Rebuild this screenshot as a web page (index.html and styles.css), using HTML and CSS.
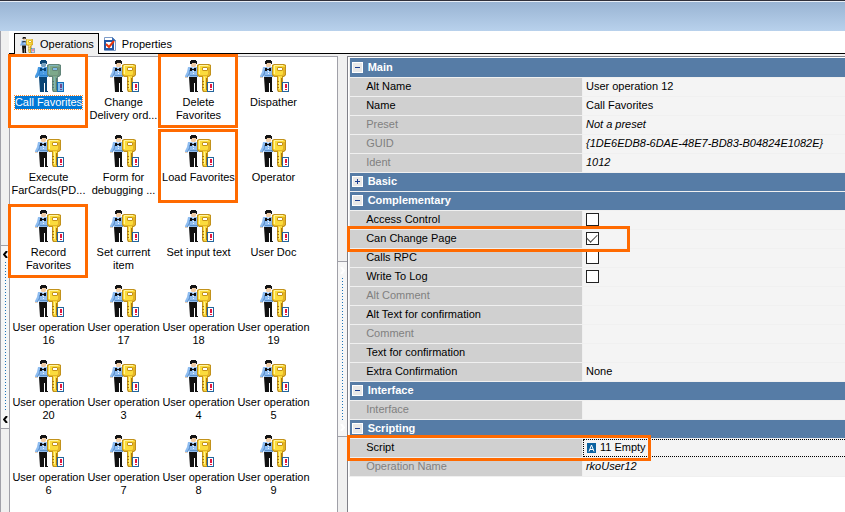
FILE: index.html
```html
<!DOCTYPE html>
<html lang="en">

<head>
    <meta charset="UTF-8" />
    <meta name="viewport" content="width=device-width, initial-scale=1.0" />
    <title>Operations</title>
    <link rel="stylesheet" href="styles.css">
</head>

<body>
    <svg class="sprite" aria-hidden="true">
        <filter id="tint" color-interpolation-filters="sRGB">
            <feFlood flood-color="#0078d7" flood-opacity="0.5" />
            <feComposite in2="SourceGraphic" operator="atop" />
        </filter>
        <symbol id="operation" viewBox="0 0 30 32">
            <!-- man -->
            <path fill="#f0cda8" d="M7 2h5v4l-1 1H8L7 6z" />
            <path fill="#151515" d="M6 1h1V0h5v1h1v3h-1V3H8v1H6z" />
            <path fill="#8fbdf0" d="M4 7h4l1 1 2-1h2l1 2v8H5v-3l-3 4H1v-2l2-4z" />
            <path fill="#5c92cf" d="M5 10h1v4l-3 4H2l3-5zM13 9h1v8h-1zM6 15h7v1H6z" />
            <path fill="#f0cda8" d="M1 17h2v1H1z" />
            <path fill="#111" d="M6 8h2v1h2V8h2v3h-2v-1H8v1H6zM5 17h8v14h1v1h-3v-9h-1v9H6z" />
            <path fill="#f2f4f8" d="M9 11h1v1H9zM9 13h1v1H9z" />
            <!-- key -->
            <path fill="#c2921b" d="M15 4h10l2 1v10l-2 2h-1v14l-1 1h-4l-1-2V17h-3l-2-2V5z" />
            <path fill="#fbdc3c" d="M15 5h10l1 1v8l-2 2h-1v14l-1 1h-2l-1-2V16h-3l-2-2V6z" />
            <path fill="#fff3a0" d="M15 5h9v1h-8v8h-1zM20 17h1v12h-1z" />
            <path fill="#e5b526" d="M24 7h2v7l-2 2h-8v-1h7l1-1z" />
            <path fill="#a8770f" d="M18 21h2v1h-2zM18 24h2v1h-2zM18 27h2v1h-2zM22 18h1v12h-1z" />
            <path fill="#c2921b" d="M18 8l1-1h4l1 1v2l-1 1h-4l-1-1z" />
            <path fill="#fff" d="M19 8h4v2h-4z" />
            <!-- note -->
            <path fill="#23649c" d="M23 22h7v10h-7z" />
            <path fill="#fff" d="M24 23h5v8h-5z" />
            <path fill="#e2173d" d="M26 24h2v4h-2zM26 29h2v1h-2z" />
        </symbol>
    </svg>

    <header class="titlebar"></header>

    <main class="window">
        <nav class="tabs">
            <button class="tab active" type="button">
                <svg width="16" height="16"><use href="#operation" /></svg>
                Operations
            </button>
            <button class="tab" type="button">
                <svg width="14" height="16" viewBox="0 0 14 16">
                    <path fill="#fff" stroke="#7e9cc8" d="M1.500.5h8l3 3v10h-11z" />
                    <path fill="#3c6fb5" d="M9 0l4 4H9z" />
                    <path fill="#fff" stroke="#2357a5" stroke-width="2" d="M2 4h8v8H2z" />
                    <path fill="none" stroke="#e8380d" stroke-width="2" d="M3 7l3 3 5-6" />
                </svg>
                Properties
            </button>
        </nav>

        <div class="workspace">
            <div class="gutter">
                <div class="grip">
                    <svg width="5" height="7" viewBox="0 0 5 7"><path d="M4 0L1 3.500 4 7" /></svg>
                    <span class="dots"></span>
                    <svg width="5" height="7" viewBox="0 0 5 7"><path d="M4 0L1 3.500 4 7" /></svg>
                </div>
            </div>

            <section class="operations">
                <button class="item selected marked" type="button"><svg><use href="#operation" /></svg><span>Call Favorites</span></button>
                <button class="item" type="button"><svg><use href="#operation" /></svg><span>Change<br>Delivery ord...</span></button>
                <button class="item marked" type="button"><svg><use href="#operation" /></svg><span>Delete<br>Favorites</span></button>
                <button class="item" type="button"><svg><use href="#operation" /></svg><span>Dispather</span></button>
                <button class="item" type="button"><svg><use href="#operation" /></svg><span>Execute<br>FarCards(PD...</span></button>
                <button class="item" type="button"><svg><use href="#operation" /></svg><span>Form for<br>debugging ...</span></button>
                <button class="item marked" type="button"><svg><use href="#operation" /></svg><span>Load Favorites</span></button>
                <button class="item" type="button"><svg><use href="#operation" /></svg><span>Operator</span></button>
                <button class="item marked" type="button"><svg><use href="#operation" /></svg><span>Record<br>Favorites</span></button>
                <button class="item" type="button"><svg><use href="#operation" /></svg><span>Set current<br>item</span></button>
                <button class="item" type="button"><svg><use href="#operation" /></svg><span>Set input text</span></button>
                <button class="item" type="button"><svg><use href="#operation" /></svg><span>User Doc</span></button>
                <button class="item" type="button"><svg><use href="#operation" /></svg><span>User operation<br>16</span></button>
                <button class="item" type="button"><svg><use href="#operation" /></svg><span>User operation<br>17</span></button>
                <button class="item" type="button"><svg><use href="#operation" /></svg><span>User operation<br>18</span></button>
                <button class="item" type="button"><svg><use href="#operation" /></svg><span>User operation<br>19</span></button>
                <button class="item" type="button"><svg><use href="#operation" /></svg><span>User operation<br>20</span></button>
                <button class="item" type="button"><svg><use href="#operation" /></svg><span>User operation<br>3</span></button>
                <button class="item" type="button"><svg><use href="#operation" /></svg><span>User operation<br>4</span></button>
                <button class="item" type="button"><svg><use href="#operation" /></svg><span>User operation<br>5</span></button>
                <button class="item" type="button"><svg><use href="#operation" /></svg><span>User operation<br>6</span></button>
                <button class="item" type="button"><svg><use href="#operation" /></svg><span>User operation<br>7</span></button>
                <button class="item" type="button"><svg><use href="#operation" /></svg><span>User operation<br>8</span></button>
                <button class="item" type="button"><svg><use href="#operation" /></svg><span>User operation<br>9</span></button>
            </section>

            <div class="gutter right">
                <div class="grip">
                    <svg width="5" height="7" viewBox="0 0 5 7"><path d="M1 0l3 3.500L1 7" /></svg>
                    <span class="dots"></span>
                    <svg width="5" height="7" viewBox="0 0 5 7"><path d="M1 0l3 3.500L1 7" /></svg>
                </div>
            </div>

            <section class="inspector">
                <table>
                    <colgroup>
                        <col class="names">
                        <col>
                    </colgroup>
                    <tbody>
                        <tr class="group"><th colspan="2"><button class="minus" type="button">Main</button></th></tr>
                        <tr><th>Alt Name</th><td>User operation 12</td></tr>
                        <tr><th>Name</th><td>Call Favorites</td></tr>
                        <tr class="readonly"><th>Preset</th><td>Not a preset</td></tr>
                        <tr class="readonly"><th>GUID</th><td>{1DE6EDB8-6DAE-48E7-BD83-B04824E1082E}</td></tr>
                        <tr class="readonly"><th>Ident</th><td>1012</td></tr>
                    </tbody>
                    <tbody>
                        <tr class="group"><th colspan="2"><button class="plus" type="button">Basic</button></th></tr>
                    </tbody>
                    <tbody>
                        <tr class="group"><th colspan="2"><button class="minus" type="button">Complementary</button></th></tr>
                        <tr><th><label for="access">Access Control</label></th><td><input type="checkbox" id="access"></td></tr>
                        <tr class="marked-row page-row"><th><label for="page">Can Change Page</label></th><td><input type="checkbox" id="page" checked></td></tr>
                        <tr><th><label for="rpc">Calls RPC</label></th><td><input type="checkbox" id="rpc"></td></tr>
                        <tr><th><label for="log">Write To Log</label></th><td><input type="checkbox" id="log"></td></tr>
                        <tr class="readonly"><th>Alt Comment</th><td></td></tr>
                        <tr><th>Alt Text for confirmation</th><td></td></tr>
                        <tr class="readonly"><th>Comment</th><td></td></tr>
                        <tr><th>Text for confirmation</th><td></td></tr>
                        <tr><th>Extra Confirmation</th><td>None</td></tr>
                    </tbody>
                    <tbody>
                        <tr class="group"><th colspan="2"><button class="minus" type="button">Interface</button></th></tr>
                        <tr class="readonly"><th>Interface</th><td></td></tr>
                    </tbody>
                    <tbody>
                        <tr class="group"><th colspan="2"><button class="minus" type="button">Scripting</button></th></tr>
                        <tr class="marked-row script-row">
                            <th>Script</th>
                            <td>
                                <div class="script">
                                    <svg width="9" height="10" viewBox="0 0 9 10">
                                        <path fill="#0b62a0" d="M0 0h9v10H0z" />
                                        <path fill="none" stroke="#fff" d="M2 8.500L4.500 2 7 8.500M3 6.500h3" />
                                    </svg>
                                    11 Empty
                                </div>
                            </td>
                        </tr>
                        <tr class="readonly"><th>Operation Name</th><td>rkoUser12</td></tr>
                    </tbody>
                </table>
            </section>
        </div>
    </main>
</body>

</html>
```
FILE: styles.css
```css
:root {
    --face: #f0f0f0;
    --group: #567ca6;
    --name: #d0d0d0;
    --value: #f4f4f4;
    --line: #a0a0a8;
    --mark: #ff6a00;
}

* {
    box-sizing: border-box;
}

body {
    margin: 0;
    min-height: 100vh;
    display: flex;
    flex-direction: column;
    font: 11px/13px "Liberation Sans", Arial, sans-serif;
    color: #000;
    background: var(--face);
}

button {
    padding: 0;
    border: none;
    background: none;
    font: inherit;
    color: inherit;
}

.sprite {
    position: absolute;
    width: 0;
    height: 0;
}

.titlebar {
    height: 31px;
    border-top: 1px solid #30303a;
    box-shadow: inset 0 1px #e8eef6;
    background: linear-gradient(#98b3d2, #b8d1ec);
}

.window {
    flex: 1;
    display: flex;
    flex-direction: column;
    border-left: 1px solid var(--line);
}

/* tabs */
.tabs {
    display: flex;
    height: 23px;
    margin-left: 8px;
    padding: 2px 5px 0;
    background: #fff;
    border-bottom: 1px solid #000;
}

.tab {
    display: flex;
    align-items: center;
    gap: 5px;
    height: 21px;
    padding: 2px 4px 0;
}

.tab.active {
    border: 1px solid #000;
    border-bottom: none;
    padding-top: 1px;
    background: var(--face);
}

/* panes */
.workspace {
    flex: 1;
    display: flex;
    padding-top: 2px;
}

.gutter {
    flex: none;
    width: 8px;
    padding-top: 189px;
}

.gutter.right {
    width: 9px;
    padding-top: 205px;
}

.grip {
    display: flex;
    flex-direction: column;
    align-items: center;
    gap: 4px;
    height: 184px;
    padding: 5px 0;
    border: 1px solid var(--line);
    border-width: 1px 0;
    background: #f6f6f6;
}

.right .grip {
    height: 176px;
}

.grip path {
    fill: none;
    stroke: #000;
    stroke-width: 2;
}

.right .grip path {
    stroke: #fff;
}

.dots {
    flex: 1;
    width: 1px;
    background: repeating-linear-gradient(#1a72b8 0 1px, transparent 1px 3px);
}

.operations {
    flex: 0 0 39%;
    display: grid;
    grid-template-columns: repeat(auto-fill, 75px);
    grid-auto-rows: 75px;
    padding-left: 1px;
    background: #fff;
    border: 1px solid var(--line);
    border-bottom: none;
}

.item {
    position: relative;
    display: flex;
    flex-direction: column;
    align-items: center;
    gap: 4px;
    padding-top: 3px;
    white-space: nowrap;
}

.item svg {
    width: 30px;
    height: 32px;
}

.item.selected svg {
    filter: url(#tint);
}

.item.selected span {
    color: #fff;
    background: #0078d7;
    outline: 1px dotted #ff8728;
}

/* highlight frames */
.item.marked::after,
.marked-row th::after {
    content: "";
    position: absolute;
    z-index: 1;
    border: 3px solid var(--mark);
    pointer-events: none;
}

.item.marked::after {
    inset: -3px -2px 4px -3px;
}

.marked-row th {
    position: relative;
}

.marked-row th::after {
    inset: -4px -48px -4px -3px;
}

.script-row th::after {
    right: -69px;
}

/* property grid */
.inspector {
    flex: 1;
    min-width: 0;
    background: #fff;
    border: 1px solid #808088;
    border-width: 1px 0 0 1px;
    padding: 1px 0 0 1px;
}

table {
    width: 100%;
    table-layout: fixed;
    border-collapse: collapse;
    background: var(--face);
}

.names {
    width: 47%;
}

th,
td {
    height: 19px;
    padding: 0 0 0 16px;
    border: solid var(--face);
    border-width: 0 0 1px 1px;
    text-align: left;
    font-weight: normal;
    white-space: nowrap;
    background: var(--name);
}

td {
    padding: 0 0 0 3px;
    background: var(--value);
}

.group th {
    padding: 0 0 0 2px;
    border-left: none;
    color: #fff;
    font-weight: bold;
    background: var(--group);
}

.group button {
    display: flex;
    align-items: center;
    gap: 5px;
}

.group button::before {
    content: "";
    width: 9px;
    height: 9px;
    border: 1px solid #fff;
    background: linear-gradient(#1d3f91, #1d3f91) center / 5px 1px no-repeat #e8e8e8;
}

.group .plus::before {
    background:
        linear-gradient(#1d3f91, #1d3f91) center / 5px 1px no-repeat,
        linear-gradient(#1d3f91, #1d3f91) center / 1px 5px no-repeat #e8e8e8;
}

.readonly th {
    color: #808080;
}

.readonly td {
    font-style: italic;
}

input[type="checkbox"] {
    appearance: none;
    display: grid;
    place-items: center;
    width: 13px;
    height: 13px;
    margin: 0;
    border: 1px solid #222;
    background: #fff;
}

input[type="checkbox"]:checked::before {
    content: "";
    width: 9px;
    height: 5px;
    margin-bottom: 3px;
    border: solid #444;
    border-width: 0 0 1px 1px;
    transform: rotate(-45deg);
}

.script-row td {
    padding: 0;
}

.script {
    display: flex;
    align-items: center;
    gap: 4px;
    height: 18px;
    padding-left: 3px;
    border: 1px dotted #000;
    border-right: none;
}
```
